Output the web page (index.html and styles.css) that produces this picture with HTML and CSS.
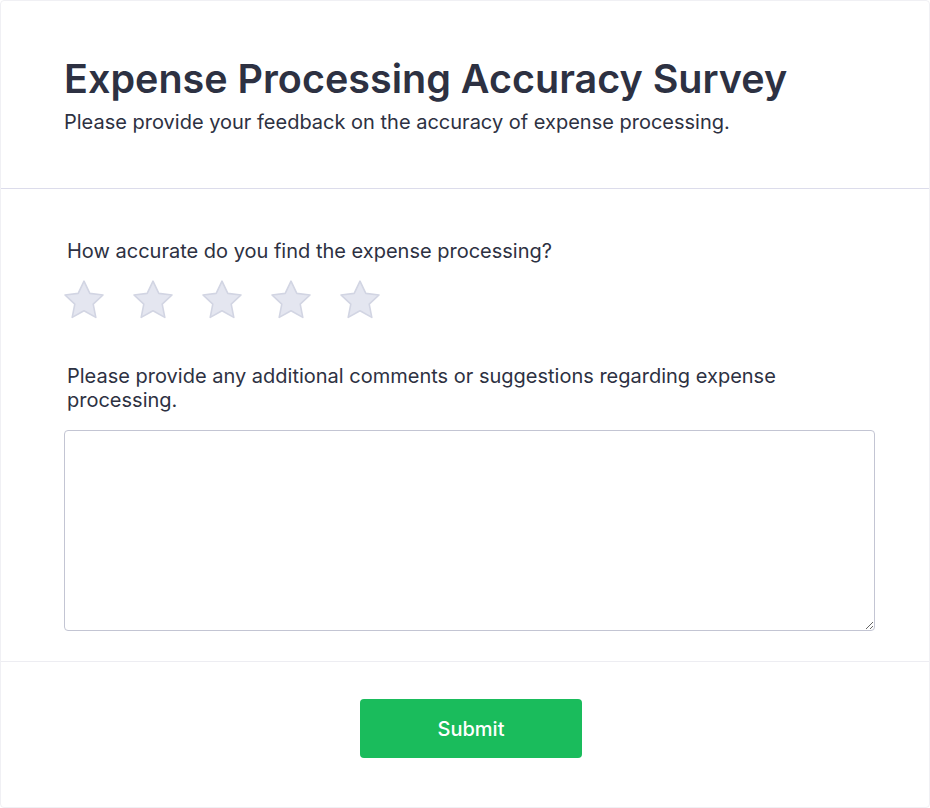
FILE: index.html
```html
<!DOCTYPE html>
<html lang="en">
<head>
<meta charset="utf-8">
<title>Expense Processing Accuracy Survey</title>
<link rel="stylesheet" href="styles.css">
</head>
<body>
<div class="card">
  <header class="card-header">
    <h1 class="title">Expense Processing Accuracy Survey</h1>
    <p class="subtitle">Please provide your feedback on the accuracy of expense processing.</p>
  </header>
  <section class="card-body">
    <div class="field">
      <label class="label">How accurate do you find the expense processing?</label>
      <div class="stars">
        <svg class="star" viewBox="0 0 24 24"><path d="M12 2.6l2.9 6.1 6.6.8-4.9 4.6 1.3 6.6L12 17.4l-5.9 3.3 1.3-6.6L2.5 9.5l6.6-.8z"/></svg>
        <svg class="star" viewBox="0 0 24 24"><path d="M12 2.6l2.9 6.1 6.6.8-4.9 4.6 1.3 6.6L12 17.4l-5.9 3.3 1.3-6.6L2.5 9.5l6.6-.8z"/></svg>
        <svg class="star" viewBox="0 0 24 24"><path d="M12 2.6l2.9 6.1 6.6.8-4.9 4.6 1.3 6.6L12 17.4l-5.9 3.3 1.3-6.6L2.5 9.5l6.6-.8z"/></svg>
        <svg class="star" viewBox="0 0 24 24"><path d="M12 2.6l2.9 6.1 6.6.8-4.9 4.6 1.3 6.6L12 17.4l-5.9 3.3 1.3-6.6L2.5 9.5l6.6-.8z"/></svg>
        <svg class="star" viewBox="0 0 24 24"><path d="M12 2.6l2.9 6.1 6.6.8-4.9 4.6 1.3 6.6L12 17.4l-5.9 3.3 1.3-6.6L2.5 9.5l6.6-.8z"/></svg>
      </div>
    </div>
    <div class="field field-comments">
      <label class="label" for="comments">Please provide any additional comments or suggestions regarding expense processing.</label>
      <textarea id="comments" class="textarea"></textarea>
    </div>
  </section>
  <footer class="card-footer">
    <button class="submit" type="button">Submit</button>
  </footer>
</div>
</body>
</html>
```
FILE: styles.css
```css
* { box-sizing: border-box; }
html, body { margin: 0; padding: 0; background: #ffffff; }
body {
  font-family: Inter, "Noto Sans", "Liberation Sans", sans-serif;
  color: #2d3142;
}
.card {
  width: 930px;
  height: 808px;
  border: 1px solid #f0f0f4;
  border-radius: 4px;
  background: #fff;
  display: flex;
  flex-direction: column;
}
.card-header {
  padding: 54px 63px 0;
  height: 188px;
  border-bottom: 1px solid #dcdceb;
}
.title {
  margin: 0;
  font-size: 39.5px;
  line-height: 48px;
  font-weight: 600;
  color: #2d3142;
}
.subtitle {
  margin: 6px 0 0;
  font-size: 20px;
  line-height: 26px;
  font-weight: 400;
  color: #2d3142;
}
.card-body {
  padding: 50px 54px 0 63px;
  height: 473px;
  border-bottom: 1px solid #ededf2;
}
.field { display: flex; flex-direction: column; }
.label {
  display: block;
  padding-left: 3px;
  font-size: 20px;
  line-height: 24px;
  font-weight: 400;
  color: #2d3142;
}
.stars {
  display: flex;
  gap: 21px;
  margin-top: 13px;
  margin-left: -4px;
}
.star {
  width: 48px;
  height: 48px;
  fill: #e4e6f0;
  stroke: #d2d5e3;
  stroke-width: 0.8;
  stroke-linejoin: round;
}
.field-comments { margin-top: 40px; }
.textarea {
  margin-top: 18px;
  width: 811px;
  height: 201px;
  border: 1px solid #c3c5d3;
  border-radius: 4px;
  resize: vertical;
  font-family: inherit;
  font-size: 16px;
  padding: 8px;
}
.card-footer {
  flex: 1;
  display: flex;
  justify-content: center;
  padding-top: 37px;
  padding-left: 12px;
}
.submit {
  width: 222px;
  height: 59px;
  border: none;
  border-radius: 4px;
  background: #1abc5c;
  color: #ffffff;
  font-family: inherit;
  font-size: 20px;
  font-weight: 500;
  cursor: pointer;
}
```
